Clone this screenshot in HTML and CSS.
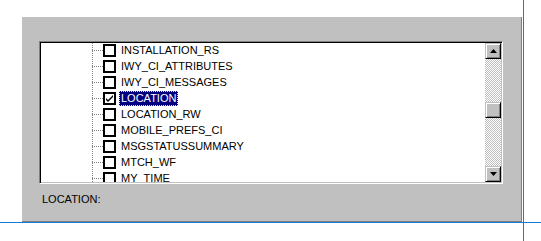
FILE: index.html
```html
<!DOCTYPE html>
<html>
<head>
<meta charset="utf-8">
<link rel="stylesheet" href="styles.css">
</head>
<body>
<div class="page">
  <div class="cell">
    <div class="panel">
      <div class="listbox">
        <div class="tree">
          <div class="row"><span class="conn"></span><span class="chk"></span><span class="lbl">INSTALLATION_RS</span></div>
          <div class="row"><span class="conn"></span><span class="chk"></span><span class="lbl">IWY_CI_ATTRIBUTES</span></div>
          <div class="row"><span class="conn"></span><span class="chk"></span><span class="lbl">IWY_CI_MESSAGES</span></div>
          <div class="row"><span class="conn"></span><span class="chk checked"><svg width="9" height="9" viewBox="0 0 9 9"><path d="M1 4 L3 6 L8 1 L8 3 L3 8 L1 6 Z" fill="#000"/></svg></span><span class="lbl sel">LOCATION</span></div>
          <div class="row"><span class="conn"></span><span class="chk"></span><span class="lbl">LOCATION_RW</span></div>
          <div class="row"><span class="conn"></span><span class="chk"></span><span class="lbl">MOBILE_PREFS_CI</span></div>
          <div class="row"><span class="conn"></span><span class="chk"></span><span class="lbl">MSGSTATUSSUMMARY</span></div>
          <div class="row"><span class="conn"></span><span class="chk"></span><span class="lbl">MTCH_WF</span></div>
          <div class="row"><span class="conn"></span><span class="chk"></span><span class="lbl">MY_TIME</span></div>
        </div>
        <div class="vscroll">
          <div class="sbtn"><svg width="7" height="4" viewBox="0 0 7 4"><path d="M3.5 0 L7 4 L0 4 Z" fill="#000"/></svg></div>
          <div class="track top"></div>
          <div class="sbtn thumb"></div>
          <div class="track bottom"></div>
          <div class="sbtn"><svg width="7" height="4" viewBox="0 0 7 4"><path d="M0 0 L7 0 L3.5 4 Z" fill="#000"/></svg></div>
        </div>
      </div>
      <div class="status">LOCATION:</div>
    </div>
  </div>
  <div class="vline"></div>
  <div class="cell2"></div>
  <div class="hline"></div>
  <div class="cell3"></div>
  <div class="cell4"></div>
</div>
</body>
</html>
```

FILE: styles.css
```css
html, body {
  margin: 0;
  padding: 0;
  background: #fff;
}
.page {
  display: grid;
  grid-template-columns: 523px 1px 1fr;
  grid-template-rows: 222px 1px 1fr;
  width: 541px;
  height: 241px;
  font-family: "Liberation Sans", Arial, sans-serif;
  font-size: 11px;
}
.cell {
  grid-column: 1;
  grid-row: 1;
  padding: 17px 0 0 22px;
}
.vline {
  grid-column: 2;
  grid-row: 1 / 4;
  background: #1e78d7;
}
.hline {
  grid-column: 1 / 4;
  grid-row: 2;
  background: #1e78d7;
}
.panel {
  box-sizing: border-box;
  width: 501px;
  height: 205px;
  background: #c0c0c0;
  border-right: 1px solid #fff;
  box-shadow: inset -1px -1px 0 #808080;
  padding: 24px 0 0 17px;
}
.listbox {
  box-sizing: border-box;
  width: 464px;
  height: 143px;
  border: 1px solid;
  border-color: #808080 #fff #fff #808080;
  box-shadow: inset 1px 1px 0 #000, inset -1px -1px 0 #c0c0c0;
  padding: 1px;
  background: #fff;
  display: flex;
}
.tree {
  flex: 1;
  overflow: hidden;
  position: relative;
  padding-left: 51px;
  background-image: linear-gradient(#fff 50%, transparent 50%);
}
.tree::before {
  content: "";
  position: absolute;
  left: 51px;
  top: 0;
  bottom: 0;
  width: 1px;
  background: repeating-linear-gradient(#808080 0 1px, transparent 1px 2px);
}
.row {
  height: 16px;
  display: flex;
  align-items: center;
}
.row:first-child {
  margin-top: -1px;
}
.conn {
  width: 11px;
  height: 1px;
  background: repeating-linear-gradient(90deg, #808080 0 1px, transparent 1px 2px);
}
.chk {
  box-sizing: border-box;
  width: 13px;
  height: 13px;
  border: 2px solid #000;
  background: #fff;
  display: flex;
  align-items: center;
  justify-content: center;
}
.lbl {
  margin-left: 3px;
  padding: 1px 2px;
  line-height: 13px;
  color: #000;
}
.lbl.sel {
  background: #000080;
  color: #fff;
  outline: 1px dotted #ffff00;
  outline-offset: -1px;
}
.vscroll {
  width: 16px;
  display: flex;
  flex-direction: column;
}
.sbtn {
  box-sizing: border-box;
  width: 16px;
  height: 16px;
  background: #c0c0c0;
  border: 1px solid;
  border-color: #c0c0c0 #000 #000 #c0c0c0;
  box-shadow: inset 1px 1px 0 #fff, inset -1px -1px 0 #808080;
  display: flex;
  align-items: center;
  justify-content: center;
}
.track {
  background: repeating-conic-gradient(#c0c0c0 0 25%, #fff 0 50%) 0 0 / 2px 2px;
}
.track.top {
  height: 43px;
}
.track.bottom {
  flex: 1;
}
.status {
  margin: 9px 0 0 3px;
  line-height: 13px;
  color: #000;
}
```
